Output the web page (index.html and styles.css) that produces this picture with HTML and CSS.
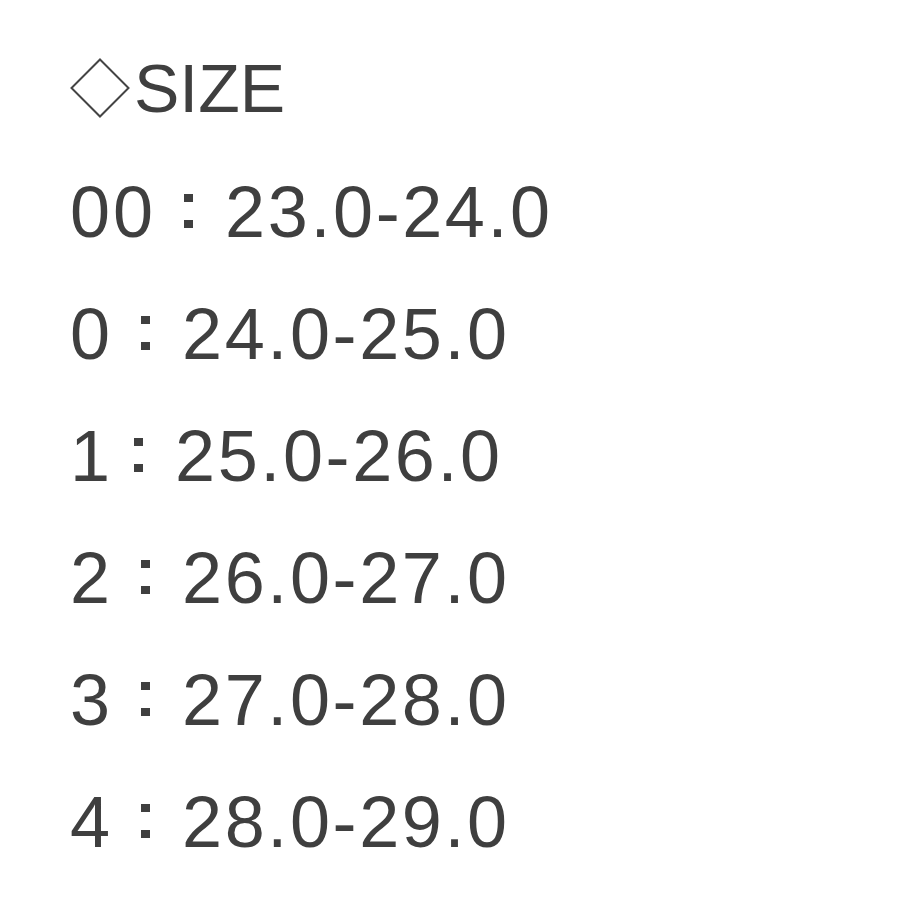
FILE: index.html
```html
<!DOCTYPE html>
<html>
<head>
<meta charset="utf-8">
<link rel="stylesheet" href="styles.css">
</head>
<body>
<div class="sheet">
  <div class="line title"><svg class="diamond" viewBox="0 0 60 60" width="60" height="60"><path d="M30 1.5 L58.5 30 L30 58.5 L1.5 30 Z" fill="none" stroke="#444" stroke-width="2"/></svg><span class="word">SIZE</span></div>
  <div class="line"><span class="k">00</span><span class="c" aria-label="："></span><span class="v">23.0-24.0</span></div>
  <div class="line"><span class="k">0</span><span class="c" aria-label="："></span><span class="v">24.0-25.0</span></div>
  <div class="line"><span class="k one">1</span><span class="c" aria-label="："></span><span class="v">25.0-26.0</span></div>
  <div class="line"><span class="k">2</span><span class="c" aria-label="："></span><span class="v">26.0-27.0</span></div>
  <div class="line"><span class="k">3</span><span class="c" aria-label="："></span><span class="v">27.0-28.0</span></div>
  <div class="line"><span class="k">4</span><span class="c" aria-label="："></span><span class="v">28.0-29.0</span></div>
</div>
</body>
</html>
```

FILE: styles.css
```css
html, body {
  margin: 0;
  padding: 0;
  background: #ffffff;
}
.sheet {
  padding: 26px 0 0 70px;
  font-family: "Liberation Sans", Arial, sans-serif;
  font-size: 72px;
  line-height: 122px;
  color: #3f3f3f;
  letter-spacing: 3px;
}
.line {
  display: block;
  height: 122px;
  white-space: nowrap;
}
.title {
  margin-bottom: 3px;
}
.diamond {
  display: inline-block;
  vertical-align: -6px;
  margin-right: 4px;
}
.word {
  font-size: 68px;
  letter-spacing: 0;
}
.one {
  margin-right: -7px;
}
.v {
  letter-spacing: 2.6px;
}
.c {
  display: inline-block;
  width: 64px;
  height: 34px;
  margin-right: 5px;
  margin-bottom: 9px;
  overflow: hidden;
  vertical-align: baseline;
}
.c::before,
.c::after {
  content: "";
  display: block;
  width: 9px;
  height: 8px;
  margin: 0 auto;
  background: #3f3f3f;
}
.c::after {
  margin-top: 18px;
}
```
